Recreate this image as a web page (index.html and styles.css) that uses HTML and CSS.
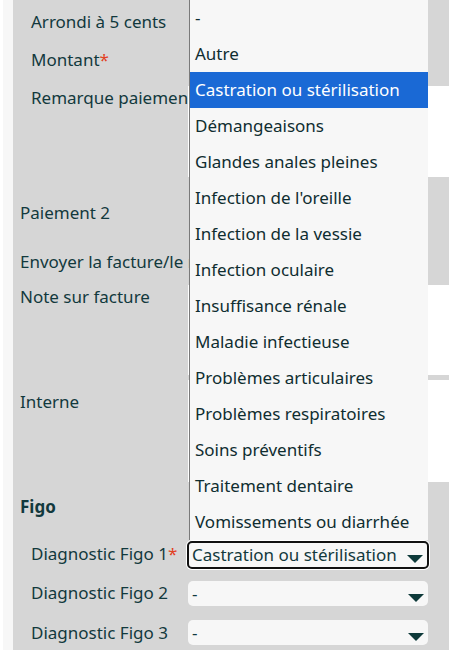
FILE: index.html
```html
<!DOCTYPE html>
<html lang="fr">
<head>
<meta charset="utf-8">
<link rel="stylesheet" href="styles.css">
</head>
<body>
<div class="page">
  <div class="edge"></div>
  <div class="panel">
    <div class="row r1"><div class="lbl ind">Arrondi à 5 cents</div><div class="ctl"></div></div>
    <div class="row r2"><div class="lbl ind">Montant<span class="req">*</span></div><div class="ctl"></div></div>
    <div class="row r3"><div class="lbl ind">Remarque paiement</div><div class="ctl"><div class="ta ta1"></div></div></div>
    <div class="row r4"><div class="lbl">Paiement 2</div><div class="ctl"></div></div>
    <div class="row r5"><div class="lbl">Envoyer la facture/le reçu</div><div class="ctl"></div></div>
    <div class="row r6"><div class="lbl">Note sur facture</div><div class="ctl"><div class="ta ta2"></div></div></div>
    <div class="row r7"><div class="lbl">Interne</div><div class="ctl"><div class="ta ta3"></div></div></div>
    <div class="row r8"><div class="lbl head">Figo</div><div class="ctl"></div></div>
    <div class="row r9"><div class="lbl ind">Diagnostic Figo 1<span class="req">*</span></div><div class="ctl"><div class="sel focus"><span>Castration ou stérilisation</span><i class="arrow"></i></div></div></div>
    <div class="row r10"><div class="lbl ind">Diagnostic Figo 2</div><div class="ctl"><div class="sel"><span>-</span><i class="arrow"></i></div></div></div>
    <div class="row r11"><div class="lbl ind">Diagnostic Figo 3</div><div class="ctl"><div class="sel"><span>-</span><i class="arrow"></i></div></div></div>
  </div>
</div>
<ul class="dropdown">
  <li>-</li>
  <li>Autre</li>
  <li class="active">Castration ou stérilisation</li>
  <li>Démangeaisons</li>
  <li>Glandes anales pleines</li>
  <li>Infection de l'oreille</li>
  <li>Infection de la vessie</li>
  <li>Infection oculaire</li>
  <li>Insuffisance rénale</li>
  <li>Maladie infectieuse</li>
  <li>Problèmes articulaires</li>
  <li>Problèmes respiratoires</li>
  <li>Soins préventifs</li>
  <li>Traitement dentaire</li>
  <li>Vomissements ou diarrhée</li>
</ul>
</body>
</html>
```
FILE: styles.css
```css
html, body {
  margin: 0;
  padding: 0;
  background: #ffffff;
  font-family: "Noto Sans", "DejaVu Sans", sans-serif;
  font-size: 17px;
  color: #12393d;
  overflow: hidden;
}
.page {
  display: flex;
  padding-left: 3px;
  height: 650px;
}
.edge {
  width: 10px;
  background: #f7f7f7;
}
.panel {
  flex: 1;
  background: #d6d6d6;
  display: flex;
  flex-direction: column;
}
.row {
  display: flex;
  flex: none;
}
.lbl {
  width: 175px;
  flex: none;
  box-sizing: border-box;
  padding-left: 7px;
  line-height: 24px;
  white-space: nowrap;
}
.lbl.ind { padding-left: 18px; }
.lbl.head { font-weight: bold; }
.req { color: #e2401f; }
.ctl { flex: 1; }
.ta { background: #ffffff; }

.r1 { height: 41px; }
.r1 .lbl { padding-top: 10px; }
.r2 { height: 38px; }
.r2 .lbl { padding-top: 7px; }
.r3 { height: 98px; }
.r3 .lbl { padding-top: 7px; }
.ta1 { margin-top: 7px; height: 91px; }
.r4 { height: 60px; }
.r4 .lbl { padding-top: 24px; }
.r5 { height: 48px; }
.r5 .lbl { padding-top: 13px; }
.r6 { height: 90px; }
.ta2 { height: 90px; }
.r7 { height: 107px; }
.r7 .lbl { padding-top: 15px; }
.ta3 { margin-top: 5px; height: 102px; }
.r8 { height: 53px; }
.r8 .lbl { padding-top: 13px; }
.r9 { height: 40px; }
.r9 .lbl { padding-top: 7px; }
.r10 { height: 39px; }
.r10 .lbl { padding-top: 6px; }
.r11 { height: 39px; }
.r11 .lbl { padding-top: 7px; }

.sel {
  margin-top: 6px;
  width: 240px;
  height: 25px;
  box-sizing: border-box;
  background: #f7f7f7;
  border-radius: 5px;
  display: flex;
  align-items: center;
  padding-left: 4px;
  position: relative;
  line-height: 24px;
}
.sel.focus {
  height: 28px;
  border: 2px solid #111111;
  box-shadow: 0 0 0 1px #ffffff;
  padding-left: 3px;
  margin-left: -1px;
  width: 242px;
}
.sel span { flex: 1; white-space: nowrap; overflow: hidden; }
.arrow {
  flex: none;
  width: 0;
  height: 0;
  border-left: 8px solid transparent;
  border-right: 8px solid transparent;
  border-top: 8px solid #0e3a3a;
  margin-right: 4px;
  margin-top: 8px;
}

.dropdown {
  position: absolute;
  left: 189px;
  top: 0;
  width: 238px;
  margin: 0;
  padding: 0;
  list-style: none;
  background: #f7f7f7;
  border-left: 1px solid #7a7a7a;
}
.dropdown li {
  height: 36px;
  line-height: 36px;
  padding-left: 5px;
  white-space: nowrap;
  color: #0f2d30;
}
.dropdown li.active {
  background: #1a69d5;
  color: #ffffff;
}
```
